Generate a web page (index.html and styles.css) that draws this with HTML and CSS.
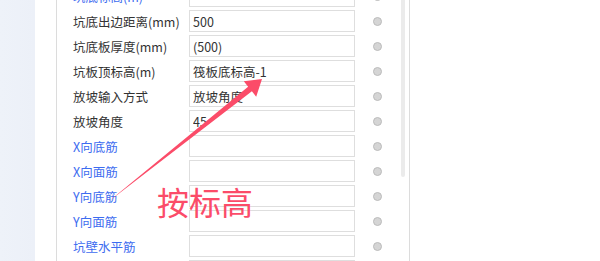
FILE: index.html
```html
<!DOCTYPE html>
<html lang="zh-CN">
<head>
    <meta charset="UTF-8">
    <title>基坑参数</title>
    <link rel="stylesheet" href="styles.css">
</head>
<body>
    <div class="page">
        <div class="side"></div>
        <div class="panel">
            <div class="form">
                <div class="row"><span class="label blue">坑底标高(m)</span><input class="val" type="text" value=""><i class="dot"></i></div>
                <div class="row"><span class="label">坑底出边距离(mm)</span><input class="val" type="text" value="500"><i class="dot"></i></div>
                <div class="row"><span class="label">坑底板厚度(mm)</span><input class="val" type="text" value="(500)"><i class="dot"></i></div>
                <div class="row"><span class="label">坑板顶标高(m)</span><input class="val" type="text" value="筏板底标高-1"><i class="dot"></i></div>
                <div class="row"><span class="label">放坡输入方式</span><input class="val" type="text" value="放坡角度"><i class="dot"></i></div>
                <div class="row"><span class="label">放坡角度</span><input class="val" type="text" value="45"><i class="dot"></i></div>
                <div class="row"><span class="label blue">X向底筋</span><input class="val" type="text" value=""><i class="dot"></i></div>
                <div class="row"><span class="label blue">X向面筋</span><input class="val" type="text" value=""><i class="dot"></i></div>
                <div class="row"><span class="label blue">Y向底筋</span><input class="val" type="text" value=""><i class="dot"></i></div>
                <div class="row"><span class="label blue">Y向面筋</span><input class="val" type="text" value=""><i class="dot"></i></div>
                <div class="row"><span class="label blue">坑壁水平筋</span><input class="val" type="text" value=""><i class="dot"></i></div>
                <div class="row"><span class="label blue">坑壁垂直筋</span><input class="val" type="text" value=""><i class="dot"></i></div>
            </div>
            <div class="scroll"></div>
        </div>
        <div class="rest"></div>
    </div>

    <!-- 标注 -->
    <svg class="arrow" width="600" height="261" viewBox="0 0 600 261">
        <polygon points="108,202 248.1,86.7 243.8,81.2 262,79 256.2,96.8 251.9,91.3" fill="#fb4c69"/>
    </svg>
    <div class="note">按标高</div>
</body>
</html>
```

FILE: styles.css
```css
body {
    margin: 0;
    padding: 0;
    overflow: hidden;
    background: #fff;
    font-family: "Noto Sans CJK SC", "Noto Sans", sans-serif;
    font-size: 12.5px;
    color: #333;
}

.page {
    display: flex;
    height: 261px;
}

.side {
    width: 35px;
    background: linear-gradient(90deg, #eef2f9, #ecf0f8);
}

.panel {
    display: flex;
    margin-left: 21px;
    border-left: 1px solid #dcdcdc;
}

.form {
    width: 328px;
    padding-left: 16px;
    margin-top: -15px;
}

.row {
    display: flex;
    align-items: center;
    height: 22px;
    margin-bottom: 3px;
}

.label {
    width: 116px;
    white-space: nowrap;
    color: #333;
}

.label.blue {
    color: #3d6cf0;
}

.val {
    width: 166px;
    height: 22px;
    box-sizing: border-box;
    margin: 0;
    padding: 0 3px;
    border: 1px solid #dedede;
    font-family: inherit;
    font-size: 12.5px;
    color: #333;
    outline: none;
}

.dot {
    width: 7px;
    height: 7px;
    margin-left: 18px;
    border: 1px solid #bcbcbc;
    border-radius: 50%;
    background: #d5d5d5;
}

.scroll {
    width: 4px;
    height: 177px;
    margin-left: 0;
    background: #ebebeb;
    border-radius: 0 0 2px 2px;
}

.rest {
    margin-left: 4px;
    flex: 1;
    border-left: 1px solid #dcdcdc;
}

.arrow {
    position: absolute;
    left: 0;
    top: 0;
}

.note {
    position: absolute;
    left: 157px;
    top: 185px;
    font-size: 32px;
    line-height: 32px;
    color: #fb4c69;
}
```
